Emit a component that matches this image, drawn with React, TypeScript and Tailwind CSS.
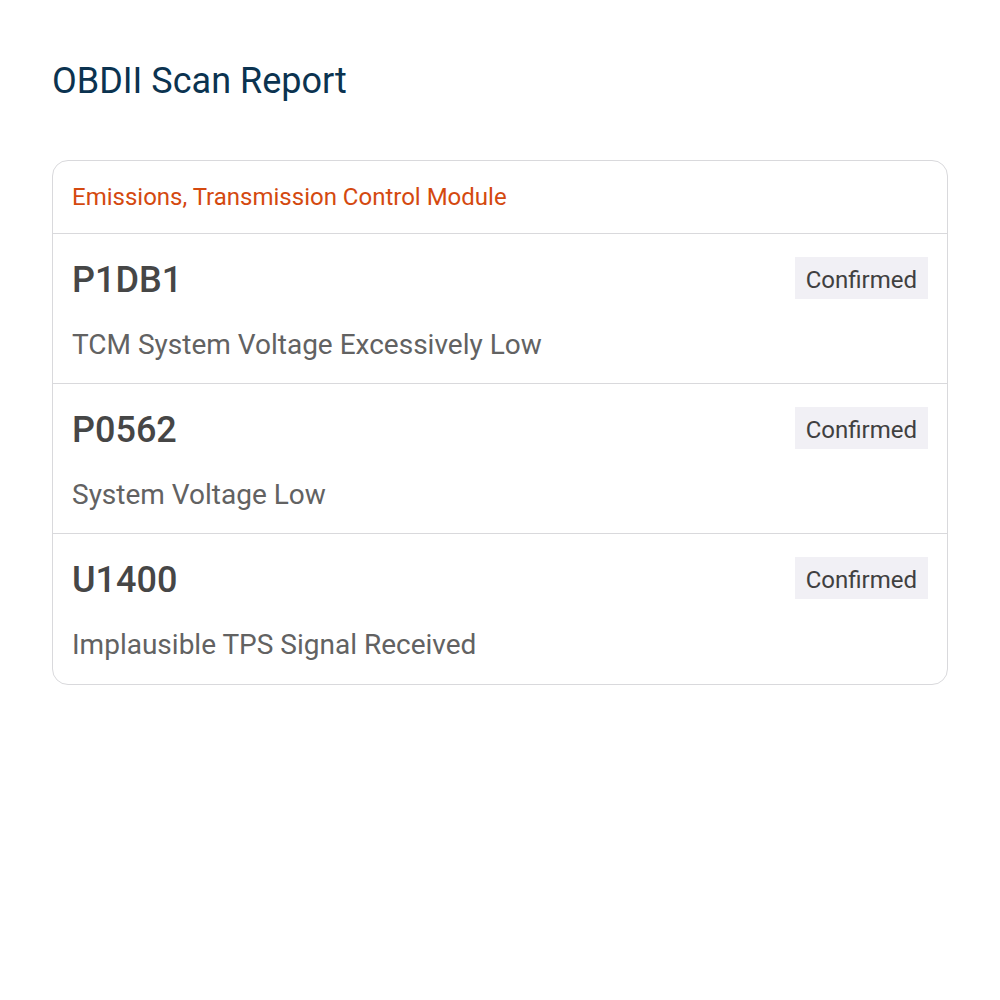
import React from "react";

const rows = [
  { code: "P1DB1", desc: "TCM System Voltage Excessively Low" },
  { code: "P0562", desc: "System Voltage Low" },
  { code: "U1400", desc: "Implausible TPS Signal Received" },
];

export default function App() {
  return (
    <div className="min-h-[1000px] bg-white px-[52px] pt-[58px]" style={{ fontFamily: "Roboto, 'Liberation Sans', sans-serif" }}>
      <h1 className="text-[36px] leading-[46px] text-[#0b3350] font-normal">OBDII Scan Report</h1>
      <div className="mt-[56px] rounded-[16px] border border-[#d9d9dc] overflow-hidden">
        <div className="h-[73px] flex items-center px-[19px] border-b border-[#d9d9dc] text-[24px] text-[#d4490f]">
          Emissions, Transmission Control Module
        </div>
        {rows.map((r, i) => (
          <div key={r.code} className={`px-[19px] pt-[23px] h-[150px] ${i < rows.length - 1 ? "border-b border-[#d9d9dc]" : ""}`}>
            <div className="flex items-center justify-between h-[42px]">
              <span className="text-[36px] text-[#464646] font-medium leading-none pt-[4px]">{r.code}</span>
              <span className="bg-[#f1f0f5] text-[#404040] text-[24px] h-[42px] px-[11px] pt-[3px] flex items-center">Confirmed</span>
            </div>
            <div className="mt-[28px] text-[28px] leading-[36px] text-[#626262]">{r.desc}</div>
          </div>
        ))}
      </div>
    </div>
  );
}
